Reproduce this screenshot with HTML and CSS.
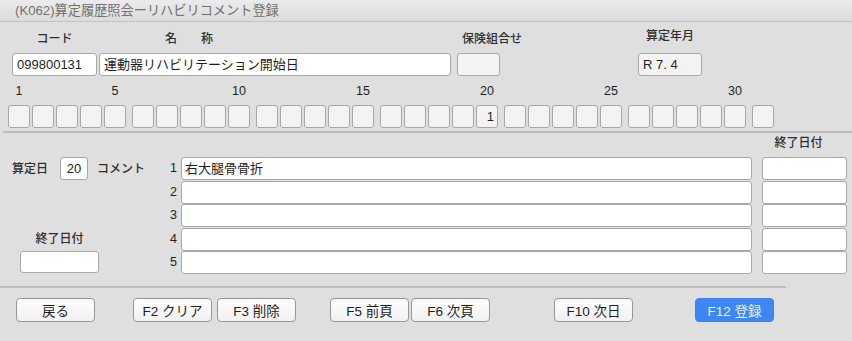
FILE: index.html
```html
<!DOCTYPE html>
<html lang="ja">
  <head>
    <meta charset="UTF-8" />
    <meta name="viewport" content="width=device-width, initial-scale=1.0" />
    <title>リハビリコメント登録</title>
    <link rel="stylesheet" href="styles.css">
  </head>
  <body>
    <!-- window title -->
    <div class="titlebar">(K062)算定履歴照会ーリハビリコメント登録</div>

    <!-- header fields -->
    <div class="header">
      <div class="field field-code">
        <div class="label label-center">コード</div>
        <div class="box box-white">099800131</div>
      </div>
      <div class="field field-name">
        <div class="label label-name">名　　称</div>
        <div class="box box-white">運動器リハビリテーション開始日</div>
      </div>
      <div class="field field-hoken">
        <div class="label label-hoken">保険組合せ</div>
        <div class="box"></div>
      </div>
      <div class="field field-month">
        <div class="label label-center label-month">算定年月</div>
        <div class="box">R 7. 4</div>
      </div>
    </div>

    <!-- day boxes 1..31 -->
    <div class="days" id="days"></div>

    <div class="rule"></div>

    <!-- comments -->
    <div class="comments">
      <div class="end-head">終了日付</div>

      <div class="santei">
        <span class="label">算定日</span>
        <div class="box box-white box-day">20</div>
        <span class="label">コメント</span>
      </div>
      <div class="end-label label">終了日付</div>
      <div class="end-left box box-white"></div>

      <div class="num r1">1</div>
      <div class="box box-white comment r1">右大腿骨骨折</div>
      <div class="box box-white end r1"></div>

      <div class="num r2">2</div>
      <div class="box box-white comment r2"></div>
      <div class="box box-white end r2"></div>

      <div class="num r3">3</div>
      <div class="box box-white comment r3"></div>
      <div class="box box-white end r3"></div>

      <div class="num r4">4</div>
      <div class="box box-white comment r4"></div>
      <div class="box box-white end r4"></div>

      <div class="num r5">5</div>
      <div class="box box-white comment r5"></div>
      <div class="box box-white end r5"></div>
    </div>

    <div class="rule rule-short"></div>

    <!-- function keys -->
    <div class="btn-row">
      <div class="btn-group">
        <button class="btn">戻る</button>
      </div>
      <div class="btn-group group-edit">
        <button class="btn">F2 クリア</button>
        <button class="btn">F3 削除</button>
      </div>
      <div class="btn-group group-page">
        <button class="btn">F5 前頁</button>
        <button class="btn">F6 次頁</button>
      </div>
      <div class="btn-group group-next">
        <button class="btn">F10 次日</button>
      </div>
      <div class="btn-group group-save">
        <button class="btn btn-primary">F12 登録</button>
      </div>
    </div>

    <script>
      // build the 31 day boxes, grouped by five
      const days = document.getElementById("days");
      const marks = [1, 5, 10, 15, 20, 25, 30];
      const values = { 20: "1" };
      let group;

      for (let d = 1; d <= 31; d++) {
        if ((d - 1) % 5 === 0) {
          group = document.createElement("div");
          group.className = "day-group";
          days.appendChild(group);
        }
        const col = document.createElement("div");
        col.className = "day";

        const num = document.createElement("div");
        num.className = "day-num";
        num.textContent = marks.includes(d) ? d : "";

        const box = document.createElement("div");
        box.className = "box day-box";
        box.textContent = values[d] || "";

        col.appendChild(num);
        col.appendChild(box);
        group.appendChild(col);
      }
    </script>
  </body>
</html>
```

FILE: styles.css
```css
* {
  box-sizing: border-box;
}

body {
  margin: 0;
  width: 852px;
  height: 341px;
  overflow: hidden;
  background-color: #dfdfdf;
  font-family: "Liberation Sans", "Noto Sans CJK JP", sans-serif;
  font-size: 13px;
  color: #1e1e1e;
}

.titlebar {
  height: 22px;
  padding-left: 15px;
  line-height: 21px;
  font-size: 13.2px;
  color: #717171;
  background: linear-gradient(#ebebeb, #dcdcdc);
  border-bottom: 1px solid #c3c3c3;
}

.label {
  font-size: 12px;
  font-weight: 500;
  color: #2e2e2e;
  line-height: 16px;
  white-space: nowrap;
}

.box {
  height: 23px;
  line-height: 21px;
  padding: 0 4px;
  background-color: #f3f3f3;
  border: 1px solid #a8a8a8;
  border-radius: 3px;
  white-space: nowrap;
  overflow: hidden;
}

.box-white {
  background-color: #fff;
}

/* header */
.header {
  display: flex;
  align-items: flex-end;
  padding: 9px 0 0 12px;
}

.field {
  display: flex;
  flex-direction: column;
  gap: 6px;
}

.label-center {
  text-align: center;
}

.field-code {
  width: 85px;
}

.field-name {
  width: 352px;
  margin-left: 2px;
}

.label-name {
  padding-left: 66px;
}

.field-hoken {
  width: 43px;
  margin-left: 6px;
}

.label-hoken {
  padding-left: 5px;
}

.field-month {
  width: 64px;
  margin-left: 138px;
}

.label-month {
  margin-top: -3px;
  margin-bottom: 3px;
}

/* days */
.days {
  display: flex;
  gap: 6px;
  padding: 8px 0 0 8px;
}

.day-group {
  display: flex;
  gap: 2px;
}

.day {
  width: 22px;
  display: flex;
  flex-direction: column;
  align-items: center;
  gap: 7px;
}

.day-num {
  height: 14px;
  line-height: 14px;
  font-size: 12.5px;
  white-space: nowrap;
}

.day-box {
  width: 22px;
  text-align: right;
  padding: 0 3px;
}

.rule {
  height: 2px;
  margin: 3px 0 0 3px;
  background-color: #bcbcbc;
}

/* comments */
.comments {
  display: grid;
  grid-template-columns: 165px 16px 571px 10px 85px;
  grid-template-rows: 23.5px repeat(5, 23px);
  row-gap: 0.5px;
}

.end-head {
  grid-column: 5;
  grid-row: 1;
  margin-top: 2px;
  text-align: center;
  padding-right: 12px;
}

.santei {
  grid-column: 1;
  grid-row: 2;
  display: flex;
  align-items: center;
  padding-left: 12px;
}

.box-day {
  width: 28px;
  margin: 0 9px 0 12px;
  text-align: center;
  padding: 0;
}

.end-label {
  grid-column: 1;
  grid-row: 5;
  width: 79px;
  margin-left: 20px;
  align-self: center;
  text-align: center;
}

.end-left {
  grid-column: 1;
  grid-row: 6;
  width: 79px;
  height: 22px;
  margin-left: 20px;
}

.num {
  grid-column: 2;
  text-align: right;
  padding-right: 4px;
  line-height: 23px;
  font-size: 12.5px;
}

.comment {
  grid-column: 3;
  padding-left: 3px;
}

.end {
  grid-column: 5;
}

.r1 { grid-row: 2; }
.r2 { grid-row: 3; }
.r3 { grid-row: 4; }
.r4 { grid-row: 5; }
.r5 { grid-row: 6; }

.end-head {
  font-size: 12px;
  font-weight: 500;
  color: #2e2e2e;
  line-height: 16px;
}

.rule-short {
  width: 786px;
  margin: 12px 0 0 0;
}

/* buttons */
.btn-row {
  display: flex;
  padding: 10px 0 0 16px;
}

.btn-group {
  display: flex;
}

.group-edit {
  margin-left: 38px;
  gap: 5px;
}

.group-page {
  margin-left: 34px;
  gap: 2px;
}

.group-next {
  margin-left: 64px;
}

.group-save {
  margin-left: 62px;
}

.btn {
  width: 79px;
  height: 24px;
  padding: 0;
  font-family: inherit;
  font-size: 13.5px;
  color: #1e1e1e;
  background: linear-gradient(#fefefe, #f1f1f1);
  border: 1px solid #979797;
  border-radius: 4px;
}

.btn-primary {
  color: #e9f1ff;
  background: #3f86f5;
  border-color: #3b82f2;
}
```
